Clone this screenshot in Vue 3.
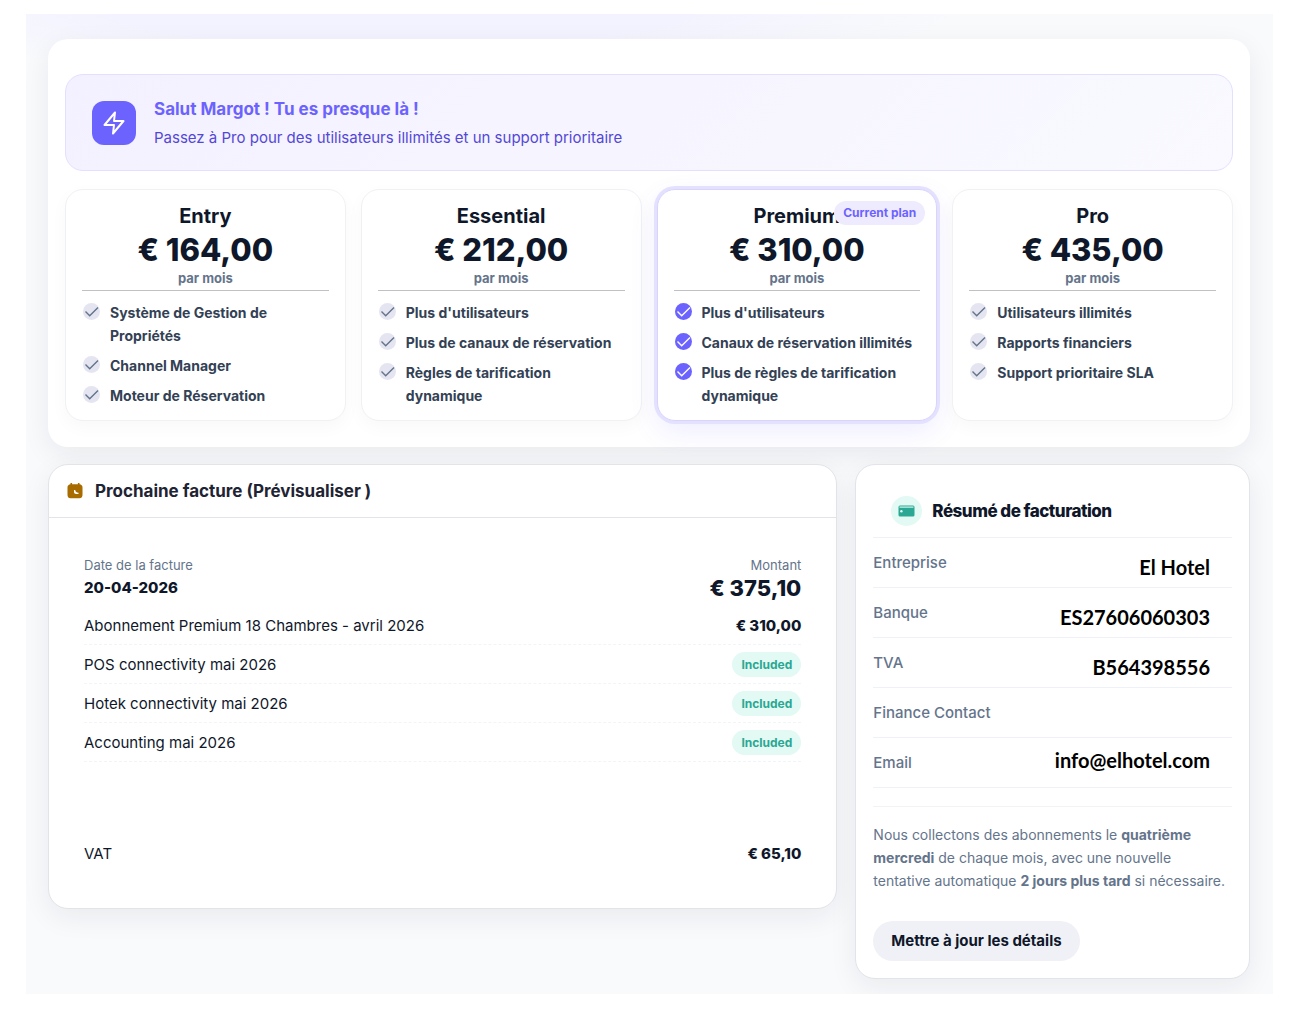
<script setup>
const plans = [
  { name: 'Entry', price: '€ 164,00', features: ['Système de Gestion de Propriétés', 'Channel Manager', 'Moteur de Réservation'] },
  { name: 'Essential', price: '€ 212,00', features: ["Plus d'utilisateurs", 'Plus de canaux de réservation', 'Règles de tarification dynamique'] },
  { name: 'Premium', price: '€ 310,00', current: true, features: ["Plus d'utilisateurs", 'Canaux de réservation illimités', 'Plus de règles de tarification dynamique'] },
  { name: 'Pro', price: '€ 435,00', features: ['Utilisateurs illimités', 'Rapports financiers', 'Support prioritaire SLA'] },
]

const lines = [
  { label: 'Abonnement Premium 18 Chambres - avril 2026', amount: '€ 310,00' },
  { label: 'POS connectivity mai 2026' },
  { label: 'Hotek connectivity mai 2026' },
  { label: 'Accounting mai 2026' },
]

const details = [
  { label: 'Entreprise', value: 'El Hotel' },
  { label: 'Banque', value: 'ES27606060303' },
  { label: 'TVA', value: 'B564398556' },
  { label: 'Finance Contact', value: '' },
  { label: 'Email', value: 'info@elhotel.com', raised: true },
]
</script>

<template>
  <main class="page">
    <section class="panel plans-panel">
      <div class="banner">
        <span class="banner-icon">
          <svg viewBox="0 0 24 24" width="24" height="24" fill="none" stroke="#fff" stroke-width="2" stroke-linecap="round" stroke-linejoin="round" aria-hidden="true">
            <path d="M13 1.500 2.500 14H12l-1 8.500L21.500 10H12z" />
          </svg>
        </span>
        <div>
          <h2 class="banner-title">Salut Margot ! Tu es presque là !</h2>
          <p class="banner-text">Passez à Pro pour des utilisateurs illimités et un support prioritaire</p>
        </div>
      </div>

      <div class="plans">
        <article v-for="plan in plans" :key="plan.name" class="plan" :class="{ current: plan.current }">
          <span v-if="plan.current" class="plan-badge">Current plan</span>
          <h3 class="plan-name">{{ plan.name }}</h3>
          <p class="plan-price">{{ plan.price }}</p>
          <p class="plan-period">par mois</p>
          <ul class="features">
            <li v-for="feature in plan.features" :key="feature">
              <svg class="check" viewBox="0 0 17 17" width="17" height="17" aria-hidden="true">
                <circle cx="8.500" cy="8.500" r="8.500" />
                <path d="M2.500 8.500 6.700 12.700 15 4.500" />
              </svg>
              <span>{{ feature }}</span>
            </li>
          </ul>
        </article>
      </div>
    </section>

    <div class="columns">
      <section class="panel bordered invoice">
        <header class="invoice-header">
          <svg viewBox="0 0 16 16" width="16" height="16" aria-hidden="true">
            <path fill="#a86b00" d="M3.500 0h1.600v1.200h5.800V0h1.600v1.200c1.700.1 3 1.300 3 3V12c0 2-1.200 3.300-3.200 3.300H3.700C1.700 15.300.5 14 .5 12V4.200c0-1.700 1.300-2.900 3-3z" />
            <path fill="#fff" d="M7 7h1.200c.1 1.600.9 2.500 3.300 2.700V11H9.200C7.900 11 7 10.200 7 9z" />
          </svg>
          <h2>Prochaine facture (Prévisualiser )</h2>
        </header>
        <div class="invoice-body">
          <div class="invoice-top">
            <div>
              <p class="caption">Date de la facture</p>
              <p class="invoice-date">20-04-2026</p>
            </div>
            <div class="right">
              <p class="caption">Montant</p>
              <p class="invoice-total">€ 375,10</p>
            </div>
          </div>
          <ul class="lines">
            <li v-for="line in lines" :key="line.label">
              <span>{{ line.label }}</span>
              <strong v-if="line.amount">{{ line.amount }}</strong>
              <span v-else class="included">Included</span>
            </li>
          </ul>
          <div class="vat">
            <span>VAT</span>
            <strong>€ 65,10</strong>
          </div>
        </div>
      </section>

      <aside class="panel bordered summary">
        <header class="summary-header">
          <span class="summary-icon">
            <svg viewBox="0 0 17 12" width="17" height="12" aria-hidden="true">
              <rect x="0.500" y="0.500" width="16" height="11" rx="1.500" fill="#2aa893" />
              <rect x="1.500" y="1.500" width="14" height="1.200" fill="#d5f5ee" />
              <circle cx="3.400" cy="6.300" r="1.200" fill="#e3f9f4" />
            </svg>
          </span>
          <h2>Résumé de facturation</h2>
        </header>
        <dl class="details">
          <div v-for="detail in details" :key="detail.label" :class="{ raised: detail.raised }">
            <dt>{{ detail.label }}</dt>
            <dd>{{ detail.value }}</dd>
          </div>
        </dl>
        <p class="note">
          Nous collectons des abonnements le <strong>quatrième mercredi</strong> de chaque mois, avec une nouvelle tentative automatique <strong>2 jours plus tard</strong> si nécessaire.
        </p>
        <button type="button" class="update">Mettre à jour les détails</button>
      </aside>
    </div>
  </main>
</template>

<style>
body {
  margin: 0;
  background: #fff;
}
</style>

<style scoped>
.page {
  margin: 14px 29px 20px 26px;
  padding: 25px 23px 15px 22px;
  overflow: hidden;
  background: radial-gradient(ellipse 560px 60px at 30% 0, #f3f3ff 50%, #f9fafc);
  color: #0f172a;
  font-family: Inter, "Liberation Sans", sans-serif;
  font-size: 15px;
}

h2, h3, p, ul, dl, dd {
  margin: 0;
  padding: 0;
}

ul {
  list-style: none;
}

.panel {
  border-radius: 20px;
  background: #fff;
  box-shadow: 0 8px 28px rgba(15, 23, 42, 0.07);
}

.bordered {
  border: 1px solid #e2e4e9;
}

.plans-panel {
  padding: 35px 17px 26px;
  margin-bottom: 17px;
}

.banner {
  display: flex;
  align-items: center;
  gap: 18px;
  padding: 20px 26px 19px;
  margin-bottom: 18px;
  border: 1px solid #e2dfff;
  border-radius: 18px;
  background: linear-gradient(135deg, #f3f1ff, #f9f9ff);
}

.banner-icon {
  display: grid;
  place-items: center;
  width: 44px;
  height: 44px;
  border-radius: 12px;
  background: #6c63ff;
}

.banner-title {
  color: #6c63ff;
  font-size: 17px;
  font-weight: 700;
  line-height: 29px;
}

.banner-text {
  color: #5348d6;
  line-height: 27px;
}

.plans {
  display: grid;
  grid-template-columns: repeat(4, 1fr);
  gap: 15px;
}

.plan {
  position: relative;
  padding: 12px 16px 13px;
  border: 1px solid #f0f1f5;
  border-radius: 18px;
  background: #fff;
  box-shadow: 0 6px 18px rgba(15, 23, 42, 0.03);
}

.plan.current {
  border-color: #d9d4ff;
  box-shadow: 0 0 0 3px #e4e1ff, 0 10px 28px rgba(108, 99, 255, 0.12);
}

.plan-badge {
  position: absolute;
  top: 11px;
  right: 11px;
  padding: 0 9px;
  border-radius: 13px;
  background: #efebff;
  color: #6c63ff;
  font-size: 12px;
  font-weight: 700;
  line-height: 24px;
}

.plan-name {
  font-size: 20px;
  font-weight: 700;
  line-height: 29px;
  text-align: center;
}

.plan-price {
  font-size: 31px;
  font-weight: 800;
  line-height: 37px;
  text-align: center;
}

.plan-period {
  padding-bottom: 1px;
  margin-bottom: 10px;
  border-bottom: 1px solid #bfc1c5;
  color: #64748b;
  font-size: 13px;
  font-weight: 700;
  line-height: 21px;
  text-align: center;
}

.features {
  display: grid;
  gap: 7px;
}

.features li {
  display: flex;
  gap: 10px;
  padding-left: 1px;
  color: #334155;
  font-size: 14px;
  font-weight: 700;
  line-height: 23px;
}

.check {
  flex: none;
  margin-top: 2px;
}

.check circle {
  fill: #e4e5f1;
}

.check path {
  fill: none;
  stroke: #64748b;
  stroke-width: 1.4;
}

.current .check circle {
  fill: #6c63ff;
}

.current .check path {
  stroke: #fff;
}

.columns {
  display: grid;
  grid-template-columns: 2fr 1fr;
  align-items: start;
  gap: 18px;
}

.invoice-header {
  display: flex;
  align-items: center;
  gap: 12px;
  padding: 12px 18px;
  border-bottom: 1px solid #e2e4e9;
  color: #1e2433;
}

.invoice-header h2,
.summary-header h2 {
  font-size: 17px;
  font-weight: 700;
  line-height: 28px;
}

.invoice-body {
  padding: 36px 35px;
}

.invoice-top {
  display: flex;
  justify-content: space-between;
  margin-bottom: 5px;
}

.right {
  text-align: right;
}

.caption {
  color: #64748b;
  font-size: 13px;
  line-height: 22px;
}

.invoice-date {
  font-weight: 800;
  line-height: 23px;
}

.invoice-total {
  font-size: 22px;
  font-weight: 800;
  line-height: 25px;
}

.lines li,
.vat {
  display: flex;
  align-items: center;
  justify-content: space-between;
  height: 38px;
}

.lines li {
  border-bottom: 1px dashed #f1f4f8;
}

.lines strong,
.vat strong {
  font-weight: 800;
}

.included {
  padding: 0 9px;
  border-radius: 13px;
  background: #e3f9f3;
  color: #2aa893;
  font-size: 12px;
  font-weight: 700;
  line-height: 25px;
}

.vat {
  margin-top: 72px;
}

.summary {
  padding: 31px 17px 17px;
}

.summary-header {
  display: flex;
  align-items: center;
  gap: 10px;
  padding: 0 0 11px 18px;
  border-bottom: 1px solid #eef2f8;
}

.summary-icon {
  display: grid;
  place-items: center;
  width: 31px;
  height: 30px;
  border-radius: 50%;
  background: #e3f9f4;
}

.summary-header h2 {
  font-weight: 800;
  letter-spacing: -0.5px;
}

.details {
  padding-bottom: 18px;
  margin-bottom: 16px;
  border-bottom: 1px solid #f1f3f7;
}

.details div {
  display: flex;
  justify-content: space-between;
  height: 49px;
  border-bottom: 1px solid #eef2f8;
}

.details dt {
  color: #64748b;
  font-weight: 500;
  line-height: 49px;
}

.details dd {
  padding: 5px 22px 0 0;
  color: #000;
  font-family: Lato, "Liberation Sans", sans-serif;
  font-size: 20px;
  font-weight: 700;
  line-height: 49px;
}

.details .raised dd {
  padding-top: 0;
  line-height: 45px;
}

.note {
  padding-right: 4px;
  color: #64748b;
  font-size: 14px;
  line-height: 23px;
}

.note strong {
  font-weight: 700;
}

.update {
  margin-top: 29px;
  padding: 0 18px;
  border: 0;
  border-radius: 20px;
  background: #f0f1f6;
  color: #0f172a;
  font: 700 15px/40px Inter, "Liberation Sans", sans-serif;
}
</style>
